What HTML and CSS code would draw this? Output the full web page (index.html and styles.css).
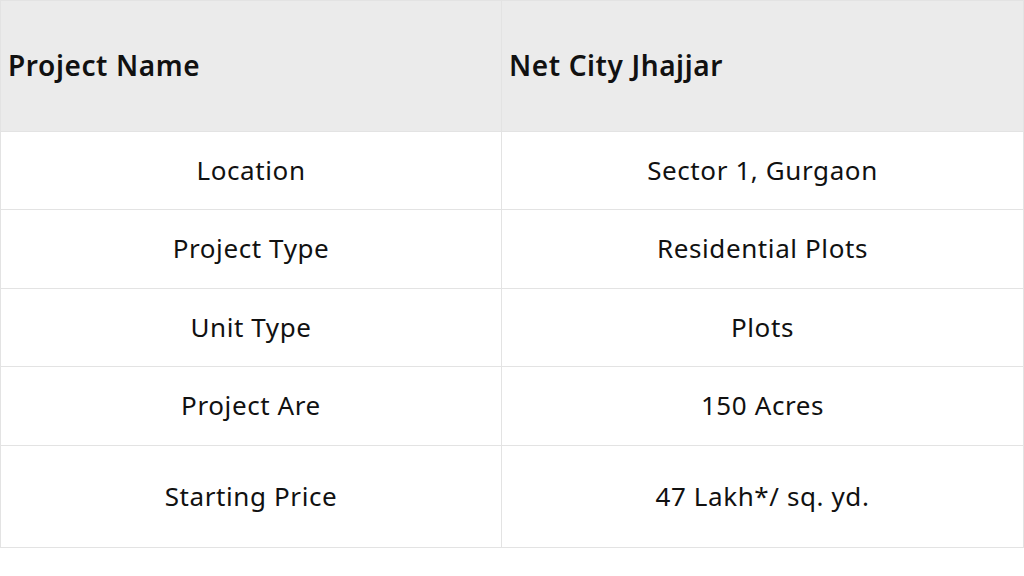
FILE: index.html
```html
<!DOCTYPE html>
<html>
<head>
<meta charset="utf-8">
<link rel="stylesheet" href="styles.css">
</head>
<body>
<table class="spec">
  <colgroup>
    <col class="col-left">
    <col class="col-right">
  </colgroup>
  <thead>
    <tr class="head">
      <th>Project Name</th>
      <th>Net City Jhajjar</th>
    </tr>
  </thead>
  <tbody>
    <tr class="row"><td>Location</td><td>Sector 1, Gurgaon</td></tr>
    <tr class="row tall"><td>Project Type</td><td>Residential Plots</td></tr>
    <tr class="row"><td>Unit Type</td><td>Plots</td></tr>
    <tr class="row tall"><td>Project Are</td><td>150 Acres</td></tr>
    <tr class="row last"><td>Starting Price</td><td>47 Lakh*/ sq. yd.</td></tr>
  </tbody>
</table>
</body>
</html>
```
FILE: styles.css
```css
html, body {
  margin: 0;
  padding: 0;
  background: #ffffff;
}
.spec {
  border-collapse: collapse;
  width: 1023px;
  table-layout: fixed;
  font-family: "Noto Sans", "Open Sans", sans-serif;
  color: #111111;
}
.col-left { width: 501px; }
.col-right { width: 522px; }
.spec th, .spec td {
  border: 1px solid #e3e3e3;
  padding: 0;
}
.head th {
  background: #ebebeb;
  height: 127px;
  text-align: left;
  font-weight: 600;
  font-size: 28px;
  letter-spacing: 0.6px;
  padding-left: 7px;
  padding-bottom: 3px;
}
.row td {
  height: 75px;
  text-align: center;
  font-size: 26px;
  letter-spacing: 0.6px;
  font-weight: 400;
  padding-bottom: 2px;
}
.row.tall td {
  height: 76px;
}
.row.last td {
  height: 99px;
}
```
